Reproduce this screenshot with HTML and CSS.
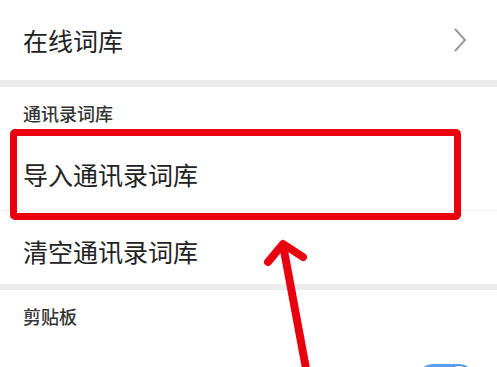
FILE: index.html
```html
<!DOCTYPE html>
<html lang="zh-CN">
<head>
<meta charset="UTF-8">
<meta name="viewport" content="width=device-width, initial-scale=1.0">
<title>词库设置</title>
<link rel="stylesheet" href="styles.css">
</head>
<body>
<div class="settings">
  <div class="row">
    <span class="label">在线词库</span>
    <svg class="chevron" width="14" height="26" viewBox="0 0 14 26">
      <polyline points="2,2 12,13 2,24" fill="none" stroke="#9a9a9a" stroke-width="2"/>
    </svg>
  </div>
  <div class="band"></div>
  <div class="section-title">通讯录词库</div>
  <div class="row row-import">
    <span class="label">导入通讯录词库</span>
  </div>
  <div class="row row-clear">
    <span class="label">清空通讯录词库</span>
  </div>
  <div class="band band-thin"></div>
  <div class="section-title">剪贴板</div>
  <div class="row">
    <span class="label">剪贴板内容提示</span>
    <div class="toggle"><div class="knob"></div></div>
  </div>

  <!-- annotation overlays -->
  <div class="highlight"></div>
  <svg class="arrow" width="497" height="367" viewBox="0 0 497 367">
    <path d="M283 245 L310 390 M268 262 L283 244 L303 257" fill="none" stroke="#e8000e" stroke-width="8" stroke-linecap="round" stroke-linejoin="round"/>
  </svg>
</div>
</body>
</html>
```

FILE: styles.css
```css
body {
  margin: 0;
  background: #ffffff;
  font-family: "Noto Sans CJK SC", "Noto Sans", sans-serif;
  color: #222;
  overflow: hidden;
}
.settings {
  position: relative;
  width: 497px;
  height: 367px;
  overflow: hidden;
}
.row {
  display: flex;
  align-items: center;
  justify-content: space-between;
  height: 80px;
  padding: 0 30px 0 23px;
  box-sizing: border-box;
}
.label {
  font-size: 25px;
  line-height: 30px;
  color: #222;
}
.chevron {
  display: block;
}
.band {
  height: 7px;
  background: #ececec;
}
.band-thin {
  height: 6px;
}
.section-title {
  height: 50px;
  padding: 16px 23px 0;
  box-sizing: border-box;
  font-size: 18px;
  line-height: 20px;
  font-weight: 500;
  color: #333;
}
.row-import {
  height: 74px;
  border-bottom: 1px solid #f0f0f0;
}
.row-clear {
  height: 73px;
  padding-top: 6px;
}
.toggle {
  width: 58px;
  height: 32px;
  border-radius: 16px;
  background: #5b9bf0;
  position: relative;
  margin-right: -8px;
}
.knob {
  position: absolute;
  right: 2px;
  top: 2px;
  width: 28px;
  height: 28px;
  border-radius: 50%;
  background: #fff;
  box-shadow: 0 0 0 1px #4a86d8;
}
.highlight {
  position: absolute;
  left: 10px;
  top: 129px;
  width: 451px;
  height: 91px;
  border: 7px solid #e8000e;
  border-radius: 5px;
  box-sizing: border-box;
}
.arrow {
  position: absolute;
  left: 0;
  top: 0;
}
```
